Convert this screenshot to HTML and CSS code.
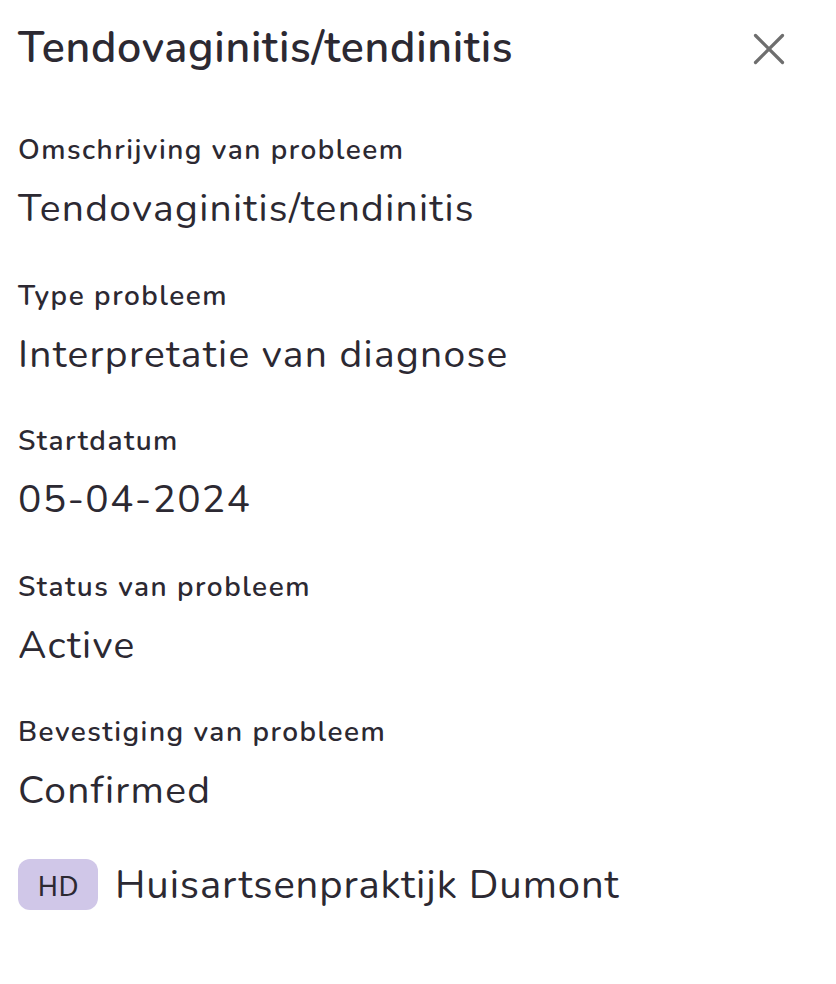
FILE: index.html
```html
<!DOCTYPE html>
<html>
<head>
<meta charset="utf-8">
<link rel="stylesheet" href="styles.css">
</head>
<body>
<div class="panel">
  <header class="head">
    <h1 class="title">Tendovaginitis/tendinitis</h1>
    <button class="close" aria-label="Sluiten">
      <svg width="36" height="36" viewBox="0 0 36 36"><path d="M4.5 4.5 L31.5 31.5 M31.5 4.5 L4.5 31.5" stroke="#6e6e6e" stroke-width="3.2" stroke-linecap="round" fill="none"/></svg>
    </button>
  </header>
  <dl class="fields">
    <div class="field"><dt>Omschrijving van probleem</dt><dd>Tendovaginitis/tendinitis</dd></div>
    <div class="field"><dt>Type probleem</dt><dd>Interpretatie van diagnose</dd></div>
    <div class="field"><dt>Startdatum</dt><dd>05-04-2024</dd></div>
    <div class="field"><dt>Status van probleem</dt><dd>Active</dd></div>
    <div class="field"><dt>Bevestiging van probleem</dt><dd>Confirmed</dd></div>
  </dl>
  <div class="source">
    <span class="badge">HD</span>
    <span class="source-name">Huisartsenpraktijk Dumont</span>
  </div>
</div>
</body>
</html>
```

FILE: styles.css
```css
* { box-sizing: border-box; }
html, body { margin: 0; padding: 0; background: #fff; }
body { font-family: "Nunito", "Lato", "Noto Sans", sans-serif; color: #2c2932; }
.panel { padding: 20px 18px 0 18px; }
.head { display: flex; justify-content: space-between; align-items: center; height: 56px; }
.title { margin: 0; font-size: 43px; font-weight: 600; line-height: 56px; letter-spacing: 0.7px; }
.close { border: 0; background: none; padding: 0; width: 36px; height: 36px; margin-right: 31px; margin-top: 2px; display: flex; }
.fields { margin: 54px 0 0 0; }
.field { margin: 0 0 40.5px 0; }
.field dt { font-size: 28px; font-weight: 600; line-height: 40px; letter-spacing: 1.5px; }
.field dd { margin: 13px 0 0 0; font-size: 39px; line-height: 52px; letter-spacing: 1.3px; }
.source { display: flex; align-items: center; gap: 17px; margin-top: 37.5px; }
.badge { display: inline-flex; align-items: center; justify-content: center; width: 80px; height: 51px; border-radius: 12px; background: #d0c7e8; font-family: "Noto Sans", sans-serif; font-size: 28px; color: #2c2932; }
.source-name { font-size: 40px; letter-spacing: 0.9px; }
```
